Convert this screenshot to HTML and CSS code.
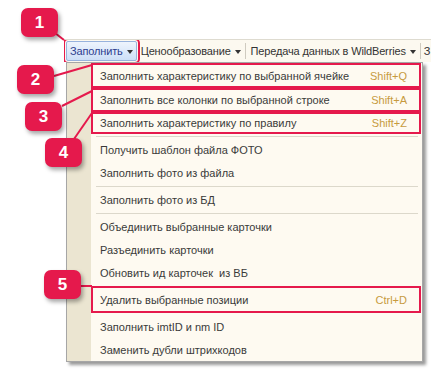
FILE: index.html
```html
<!DOCTYPE html>
<html lang="ru">
<head>
<meta charset="utf-8">
<link rel="stylesheet" href="styles.css">
</head>
<body>
<div class="stage">
  <div class="toolbar">
    <div class="tb-btn active">Заполнить <span class="caret"></span></div>
    <div class="tb-btn">Ценообразование <span class="caret"></span></div>
    <div class="tb-sep"></div>
    <div class="tb-btn">Передача данных в WildBerries <span class="caret"></span></div>
    <div class="tb-sep"></div>
    <div class="tb-btn tb-cut">З</div>
  </div>
  <div class="menu">
    <div class="item marked h25"><span>Заполнить характеристику по выбранной ячейке</span><span class="key">Shift+Q</span></div>
    <div class="item marked h24"><span>Заполнить все колонки по выбранной строке</span><span class="key">Shift+A</span></div>
    <div class="item marked h22"><span>Заполнить характеристику по правилу</span><span class="key">Shift+Z</span></div>
    <div class="sep"></div>
    <div class="item"><span>Получить шаблон файла ФОТО</span></div>
    <div class="item"><span>Заполнить фото из файла</span></div>
    <div class="sep"></div>
    <div class="item"><span>Заполнить фото из БД</span></div>
    <div class="sep"></div>
    <div class="item"><span>Объединить выбранные карточки</span></div>
    <div class="item"><span>Разъединить карточки</span></div>
    <div class="item"><span>Обновить ид карточек&nbsp; из ВБ</span></div>
    <div class="item marked big"><span>Удалить выбранные позиции</span><span class="key">Ctrl+D</span></div>
    <div class="item"><span>Заполнить imtID и nm ID</span></div>
    <div class="item"><span>Заменить дубли штрихкодов</span></div>
  </div>
  <svg class="leaders" width="433" height="370" viewBox="0 0 433 370">
    <line x1="55" y1="33" x2="64" y2="40"/>
    <line x1="54" y1="76" x2="92" y2="65"/>
    <line x1="62" y1="106" x2="92" y2="91"/>
    <line x1="74" y1="139" x2="92" y2="113"/>
    <line x1="81" y1="286" x2="92" y2="286"/>
  </svg>
  <div class="badge b1">1</div>
  <div class="badge b2">2</div>
  <div class="badge b3">3</div>
  <div class="badge b4">4</div>
  <div class="badge b5">5</div>
</div>
</body>
</html>
```

FILE: styles.css
```css
* { box-sizing: border-box; }
html, body { margin: 0; padding: 0; background: #ffffff; }
body { font-family: "Liberation Sans", Arial, sans-serif; font-size: 11px; color: #3a3a3a; }

.stage {
  position: relative;
  width: 433px;
  height: 370px;
  overflow: hidden;
  padding: 39px 0 0 64px;
}

.toolbar {
  display: flex;
  align-items: center;
  width: 367px;
  height: 23px;
  padding-left: 2px;
  border-top: 1px solid #dedbd0;
  background: #fcf9f0;
  white-space: nowrap;
  overflow: hidden;
  letter-spacing: -0.15px;
}
.tb-btn {
  display: flex;
  align-items: center;
  gap: 4px;
  height: 20px;
  padding: 0 1px 0 3px;
  color: #333333;
  border: 1px solid transparent;
  flex: none;
}
.tb-btn.active {
  color: #2d3e8f;
  border-color: #97b2dd;
  border-radius: 2px;
  background: linear-gradient(#eef4fd, #cddff7);
  outline: 2px solid #e5194c;
  outline-offset: 1px;
  padding: 0 3px 0 3px;
}
.tb-btn.tb-cut { padding-left: 1px; }
.caret {
  width: 0;
  height: 0;
  border-left: 3px solid transparent;
  border-right: 3px solid transparent;
  border-top: 4px solid #333333;
  margin-top: 1px;
}
.tb-sep {
  width: 1px;
  height: 16px;
  background: #cfcbc0;
  margin: 0 1px 0 2px;
  flex: none;
}

.menu {
  margin-left: 2px;
  width: 357px;
  border: 1px solid #a6a6a6;
  background: linear-gradient(90deg, #ebe5d1 0, #ebe5d1 24px, #fefaf1 24px);
  box-shadow: 3px 3px 3px rgba(0, 0, 0, 0.4);
}
.item {
  display: flex;
  align-items: center;
  justify-content: space-between;
  height: 23px;
  margin: 0 1px 0 24px;
  padding: 0 14px 0 9px;
  color: #3a3a3a;
  white-space: nowrap;
}
.item.h25 { height: 25px; }
.item.h24 { height: 24px; }
.item.h22 { height: 22px; }
.item.big { height: 27px; margin-top: 2px; margin-bottom: 2px; }
.item.marked { box-shadow: inset 0 0 0 2px #e5194c; }
.key { color: #c79a3e; }
.sep {
  height: 1px;
  margin: 2px 4px 1px 29px;
  background: #dcd8cb;
}

.leaders {
  position: absolute;
  left: 0;
  top: 0;
}
.leaders line { stroke: #e5194c; stroke-width: 2; }

.badge {
  position: absolute;
  width: 37px;
  height: 29px;
  border-radius: 7px;
  background: #e5194c;
  color: #ffffff;
  font-family: "Liberation Sans", Arial, sans-serif;
  font-weight: bold;
  font-size: 17px;
  display: flex;
  align-items: center;
  justify-content: center;
  box-shadow: 2px 3px 4px rgba(0, 0, 0, 0.35);
}
.b1 { left: 21px; top: 8px; }
.b2 { left: 17px; top: 65px; }
.b3 { left: 25px; top: 102px; }
.b4 { left: 45px; top: 138px; }
.b5 { left: 44px; top: 270px; }
```
